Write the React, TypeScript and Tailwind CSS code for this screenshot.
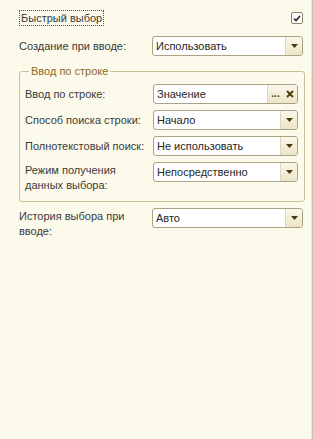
import React from "react";

const font = { fontFamily: '"Liberation Sans", Arial, sans-serif' };

function Arrow() {
  return (
    <svg width="7" height="4" viewBox="0 0 7 4">
      <polygon points="0,0 7,0 3.5,4" fill="#4a3b0c" />
    </svg>
  );
}

function Select({ value }: { value: string }) {
  return (
    <div className="flex h-[20px] flex-1 items-stretch rounded-[3px] border border-[#a9a285] bg-white">
      <div className="flex flex-1 items-center pl-[3px] text-[11px] text-[#262626]">{value}</div>
      <div className="flex w-[17px] items-center justify-center rounded-r-[2px] border-l border-[#ddd6bc] bg-gradient-to-b from-[#fbf8ea] to-[#ece5c9]">
        <Arrow />
      </div>
    </div>
  );
}

function InputField({ value }: { value: string }) {
  return (
    <div className="flex h-[20px] flex-1 items-stretch rounded-[3px] border border-[#a9a285] bg-white">
      <div className="flex flex-1 items-center pl-[3px] text-[11px] text-[#262626]">{value}</div>
      <div className="flex w-[16px] items-end justify-center border-l border-[#ddd6bc] bg-gradient-to-b from-[#fbf8ea] to-[#ece5c9] pb-[4px] text-[10px] font-bold leading-none text-[#4a3b0c]">
        ...
      </div>
      <div className="flex w-[14px] items-center justify-center rounded-r-[2px] bg-gradient-to-b from-[#fbf8ea] to-[#ece5c9]">
        <svg width="8" height="8" viewBox="0 0 8 8">
          <path d="M1 1 L7 7 M7 1 L1 7" stroke="#4a3b0c" strokeWidth="1.8" />
        </svg>
      </div>
    </div>
  );
}

function Row({ label, children, labelW = "w-[133px]" }: { label: React.ReactNode; children: React.ReactNode; labelW?: string }) {
  return (
    <div className="flex items-center">
      <div className={`${labelW} shrink-0 text-[11px] leading-[14px] text-[#3a3a3a]`}>{label}</div>
      {children}
    </div>
  );
}

export default function App() {
  return (
    <div className="flex h-[439px] w-[313px] bg-[#fcfaeb]" style={font}>
      <div className="flex flex-1 flex-col pl-[19px] pr-[8px] pt-[10px]">
        <div className="flex items-center justify-between">
          <span className="border border-dotted border-[#555] px-px text-[11px] leading-[14px] text-[#3a3a3a]">Быстрый выбор</span>
          <div className="flex h-[12px] w-[12px] items-center justify-center rounded-[2px] border border-[#8a8468] bg-white">
            <svg width="8" height="7" viewBox="0 0 8 7">
              <path d="M1 3.5 L3 5.5 L7 1" stroke="#222" strokeWidth="1.6" fill="none" />
            </svg>
          </div>
        </div>

        <div className="mt-[10px]">
          <Row label="Создание при вводе:">
            <Select value="Использовать" />
          </Row>
        </div>

        <fieldset className="mt-[8px] mr-[-2px] ml-0 rounded-[3px] border border-[#c9bf9b] pb-[8px] pl-[5px] pr-[6px]">
          <legend className="ml-[4px] px-[2px] text-[11px] leading-[14px] text-[#8c6a1c]">Ввод по строке</legend>
          <div className="mt-[6px] flex flex-col gap-[6px]">
            <Row label="Ввод по строке:" labelW="w-[128px]">
              <InputField value="Значение" />
            </Row>
            <Row label="Способ поиска строки:" labelW="w-[128px]">
              <Select value="Начало" />
            </Row>
            <Row label="Полнотекстовый поиск:" labelW="w-[128px]">
              <Select value="Не использовать" />
            </Row>
            <div className="flex items-start">
              <div className="w-[128px] shrink-0 pt-[1px] text-[11px] leading-[15px] text-[#3a3a3a]">
                Режим получения
                <br />
                данных выбора:
              </div>
              <Select value="Непосредственно" />
            </div>
          </div>
        </fieldset>

        <div className="mt-[6px] flex items-start">
          <div className="w-[133px] shrink-0 pt-[1px] text-[11px] leading-[15px] text-[#3a3a3a]">
            История выбора при
            <br />
            вводе:
          </div>
          <Select value="Авто" />
        </div>
      </div>
      <div className="w-[2px] border-l border-[#e9e4cf] bg-[#c7c1a6]" />
    </div>
  );
}
